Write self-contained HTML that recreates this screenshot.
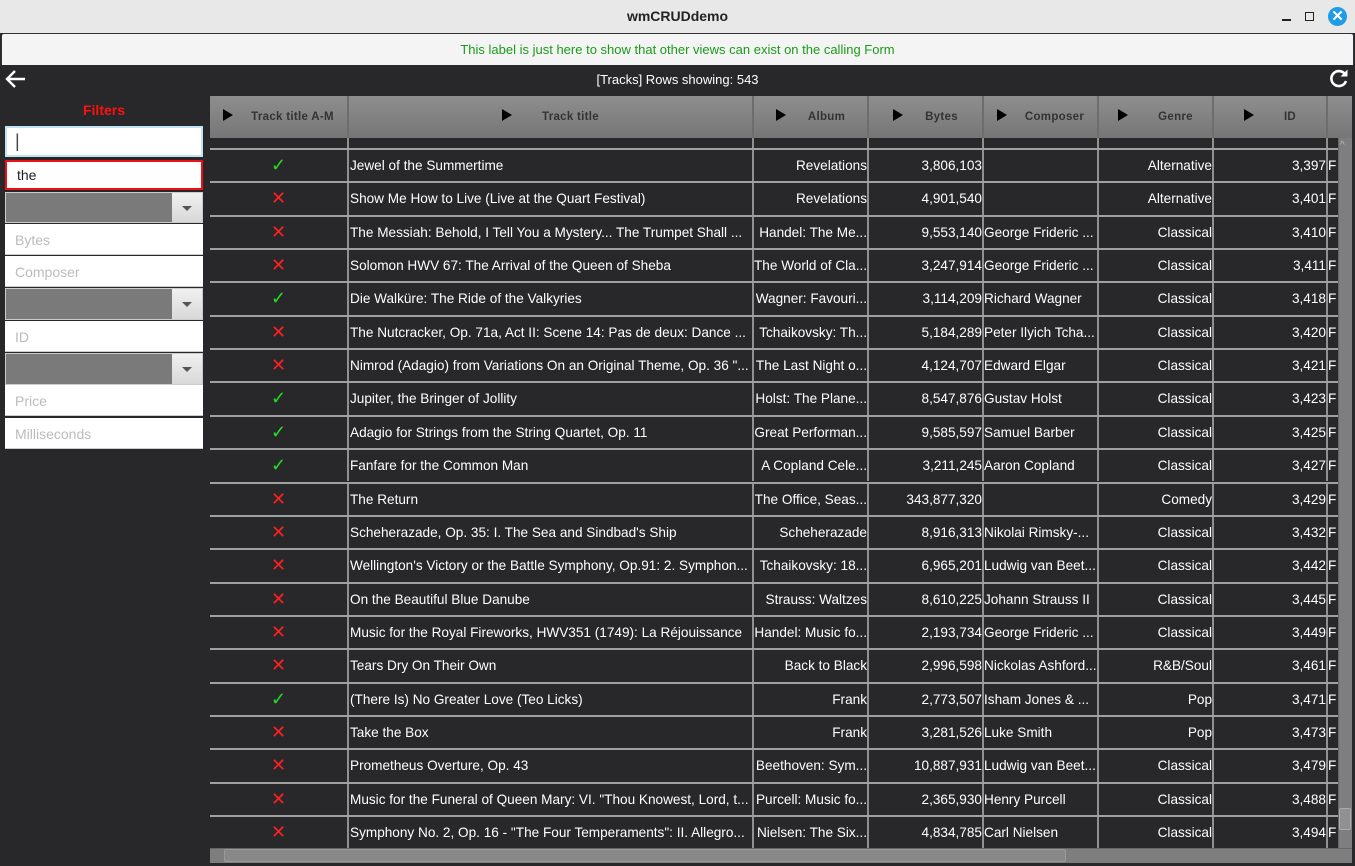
<!DOCTYPE html>
<html><head><meta charset="utf-8"><style>
*{box-sizing:border-box;margin:0;padding:0}
body{width:1355px;height:866px;overflow:hidden;background:#28282b;font-family:"Liberation Sans",sans-serif;position:relative}
.abs{position:absolute}
#title{left:0;top:0;width:1355px;height:33px;background:#e8e8e8;text-align:center;font-weight:bold;font-size:14px;line-height:33px;color:#222}
#lbl{left:1px;top:33px;width:1353px;height:32px;background:#f4f4f4;border:1px solid #333;border-bottom:none;border-radius:3px 3px 0 0;text-align:center;font-size:13px;line-height:32px;color:#1a9a1a}
#bar{left:0;top:65px;width:1355px;height:30px;background:#28282b;color:#fff;font-size:13px;text-align:center;line-height:30px}
.fin{left:5px;width:198px;background:#fff;font-size:14px;color:#bbb;padding-left:10px;border-bottom:1px solid #ccc}
.combo{left:5px;width:198px;background:#7a7a7a;border:1px solid #ccc}
.combo i{position:absolute;right:0;top:0;width:30px;height:100%;background:linear-gradient(#f0f0f0,#d8d8d8)}
.combo i:after{content:"";position:absolute;left:10px;top:13px;border:5px solid transparent;border-top:5px solid #555;border-bottom:none}
#grid{left:210px;top:96px;width:1142px;height:752px;overflow:hidden;background:#28282b}
.hd{position:absolute;top:0;height:42px;background:linear-gradient(#8e8e8e,#767676);border-right:2px solid #6d6d6d;color:#333;font-weight:bold;font-size:11.5px;letter-spacing:.3px;line-height:43px;text-align:center}
.hd b{display:inline-block;width:0;height:0;border-left:10px solid #000;border-top:6px solid transparent;border-bottom:6px solid transparent;vertical-align:middle;margin-right:30px;position:relative;top:-2px}
.row{position:absolute;left:0;width:1128px;height:33.35px;border-top:2px solid #a0a0a0}
.c{position:absolute;top:0;height:100%;border-right:2px solid #909090;color:#fff;font-size:13.6px;line-height:31px;white-space:nowrap;overflow:hidden}
.c1{left:0;width:139px;text-align:center}
.c2{left:139px;width:405px;text-align:left;padding-left:1px}
.c3{left:544px;width:115px;text-align:right}
.c4{left:659px;width:115px;text-align:right}
.c5{left:774px;width:115px}
.c6{left:889px;width:115px;text-align:right}
.c7{left:1004px;width:114px;text-align:right}
.c8{left:1118px;width:12px}
.y{color:#22dd22;font-size:18px}
.n{color:#ff2020;font-size:18px}
</style></head><body>
<div id="title" class="abs">wmCRUDdemo</div>
<div class="abs" style="left:1282px;top:19px;width:9px;height:1.5px;background:#222"></div>
<div class="abs" style="left:1305px;top:12px;width:9px;height:9px;border:1.5px solid #222"></div>
<div class="abs" style="left:1328px;top:7px;width:19px;height:19px;border-radius:50%;background:#1e9ce8;color:#fff;font-size:15px;font-weight:bold;text-align:center;line-height:19px">✕</div>
<div id="lbl" class="abs">This label is just here to show that other views can exist on the calling Form</div>
<div id="bar" class="abs">[Tracks] Rows showing: 543</div>
<svg class="abs" style="left:5px;top:69px" width="22" height="20" viewBox="0 0 22 20"><path d="M20 10H3M10 2L2 10l8 8" stroke="#fff" stroke-width="2.4" fill="none"/></svg>
<svg class="abs" style="left:1328px;top:67px" width="22" height="22" viewBox="0 0 22 22"><path d="M17.5 8A7.5 7.5 0 1 0 18 14" stroke="#fff" stroke-width="2.6" fill="none"/><path d="M19.5 2.5v7h-7z" fill="#fff"/></svg>
<div class="abs" style="left:0;top:102px;width:208px;text-align:center;color:#ff1010;font-weight:bold;font-size:14px">Filters</div>
<div class="abs fin" style="top:126px;height:31px;border:2px solid #bfe3f0;color:#444;line-height:27px;padding-left:8px;font-size:18px">|</div>
<div class="abs fin" style="top:160px;height:30px;border:2px solid #ee1010;color:#222;line-height:27px">the</div>
<div class="abs combo" style="top:192px;height:31px"><i></i></div>
<div class="abs fin" style="top:224px;height:31px;line-height:33px">Bytes</div>
<div class="abs fin" style="top:256px;height:31px;line-height:33px">Composer</div>
<div class="abs combo" style="top:288px;height:32px"><i></i></div>
<div class="abs fin" style="top:321px;height:31px;line-height:33px">ID</div>
<div class="abs combo" style="top:353px;height:32px"><i></i></div>
<div class="abs fin" style="top:385px;height:31px;line-height:33px">Price</div>
<div class="abs fin" style="top:418px;height:31px;line-height:33px">Milliseconds</div>

<div id="grid" class="abs">
<div class="hd" style="left:0;width:139px"><b style="margin-right:18px"></b>Track title A-M</div>
<div class="hd" style="left:139px;width:405px"><b></b>Track title</div>
<div class="hd" style="left:544px;width:115px"><b style="margin-right:22px"></b>Album</div>
<div class="hd" style="left:659px;width:115px"><b style="margin-right:22px"></b>Bytes</div>
<div class="hd" style="left:774px;width:115px"><b style="margin-right:18px"></b>Composer</div>
<div class="hd" style="left:889px;width:115px"><b></b>Genre</div>
<div class="hd" style="left:1004px;width:114px"><b></b>ID</div>
<div class="hd" style="left:1118px;width:24px;border:none"></div>
<div class="row" style="top:42px;height:10px;border:none"><div class="c c1"></div><div class="c c2"></div><div class="c c3"></div><div class="c c4"></div><div class="c c5"></div><div class="c c6"></div><div class="c c7"></div></div>

<div class="row" style="top:52px"><div class="c c1 y">✓</div><div class="c c2">Jewel of the Summertime</div><div class="c c3">Revelations</div><div class="c c4">3,806,103</div><div class="c c5"></div><div class="c c6">Alternative</div><div class="c c7">3,397</div><div class="c c8">F</div></div>
<div class="row" style="top:85.35px"><div class="c c1 n">✕</div><div class="c c2">Show Me How to Live (Live at the Quart Festival)</div><div class="c c3">Revelations</div><div class="c c4">4,901,540</div><div class="c c5"></div><div class="c c6">Alternative</div><div class="c c7">3,401</div><div class="c c8">F</div></div>
<div class="row" style="top:118.7px"><div class="c c1 n">✕</div><div class="c c2">The Messiah: Behold, I Tell You a Mystery... The Trumpet Shall ...</div><div class="c c3">Handel: The Me...</div><div class="c c4">9,553,140</div><div class="c c5">George Frideric ...</div><div class="c c6">Classical</div><div class="c c7">3,410</div><div class="c c8">F</div></div>
<div class="row" style="top:152.05px"><div class="c c1 n">✕</div><div class="c c2">Solomon HWV 67: The Arrival of the Queen of Sheba</div><div class="c c3">The World of Cla...</div><div class="c c4">3,247,914</div><div class="c c5">George Frideric ...</div><div class="c c6">Classical</div><div class="c c7">3,411</div><div class="c c8">F</div></div>
<div class="row" style="top:185.4px"><div class="c c1 y">✓</div><div class="c c2">Die Walküre: The Ride of the Valkyries</div><div class="c c3">Wagner: Favouri...</div><div class="c c4">3,114,209</div><div class="c c5">Richard Wagner</div><div class="c c6">Classical</div><div class="c c7">3,418</div><div class="c c8">F</div></div>
<div class="row" style="top:218.75px"><div class="c c1 n">✕</div><div class="c c2">The Nutcracker, Op. 71a, Act II: Scene 14: Pas de deux: Dance ...</div><div class="c c3">Tchaikovsky: Th...</div><div class="c c4">5,184,289</div><div class="c c5">Peter Ilyich Tcha...</div><div class="c c6">Classical</div><div class="c c7">3,420</div><div class="c c8">F</div></div>
<div class="row" style="top:252.1px"><div class="c c1 n">✕</div><div class="c c2">Nimrod (Adagio) from Variations On an Original Theme, Op. 36 "...</div><div class="c c3">The Last Night o...</div><div class="c c4">4,124,707</div><div class="c c5">Edward Elgar</div><div class="c c6">Classical</div><div class="c c7">3,421</div><div class="c c8">F</div></div>
<div class="row" style="top:285.45px"><div class="c c1 y">✓</div><div class="c c2">Jupiter, the Bringer of Jollity</div><div class="c c3">Holst: The Plane...</div><div class="c c4">8,547,876</div><div class="c c5">Gustav Holst</div><div class="c c6">Classical</div><div class="c c7">3,423</div><div class="c c8">F</div></div>
<div class="row" style="top:318.8px"><div class="c c1 y">✓</div><div class="c c2">Adagio for Strings from the String Quartet, Op. 11</div><div class="c c3">Great Performan...</div><div class="c c4">9,585,597</div><div class="c c5">Samuel Barber</div><div class="c c6">Classical</div><div class="c c7">3,425</div><div class="c c8">F</div></div>
<div class="row" style="top:352.15px"><div class="c c1 y">✓</div><div class="c c2">Fanfare for the Common Man</div><div class="c c3">A Copland Cele...</div><div class="c c4">3,211,245</div><div class="c c5">Aaron Copland</div><div class="c c6">Classical</div><div class="c c7">3,427</div><div class="c c8">F</div></div>
<div class="row" style="top:385.5px"><div class="c c1 n">✕</div><div class="c c2">The Return</div><div class="c c3">The Office, Seas...</div><div class="c c4">343,877,320</div><div class="c c5"></div><div class="c c6">Comedy</div><div class="c c7">3,429</div><div class="c c8">F</div></div>
<div class="row" style="top:418.85px"><div class="c c1 n">✕</div><div class="c c2">Scheherazade, Op. 35: I. The Sea and Sindbad's Ship</div><div class="c c3">Scheherazade</div><div class="c c4">8,916,313</div><div class="c c5">Nikolai Rimsky-...</div><div class="c c6">Classical</div><div class="c c7">3,432</div><div class="c c8">F</div></div>
<div class="row" style="top:452.2px"><div class="c c1 n">✕</div><div class="c c2">Wellington's Victory or the Battle Symphony, Op.91: 2. Symphon...</div><div class="c c3">Tchaikovsky: 18...</div><div class="c c4">6,965,201</div><div class="c c5">Ludwig van Beet...</div><div class="c c6">Classical</div><div class="c c7">3,442</div><div class="c c8">F</div></div>
<div class="row" style="top:485.55px"><div class="c c1 n">✕</div><div class="c c2">On the Beautiful Blue Danube</div><div class="c c3">Strauss: Waltzes</div><div class="c c4">8,610,225</div><div class="c c5">Johann Strauss II</div><div class="c c6">Classical</div><div class="c c7">3,445</div><div class="c c8">F</div></div>
<div class="row" style="top:518.9px"><div class="c c1 n">✕</div><div class="c c2">Music for the Royal Fireworks, HWV351 (1749): La Réjouissance</div><div class="c c3">Handel: Music fo...</div><div class="c c4">2,193,734</div><div class="c c5">George Frideric ...</div><div class="c c6">Classical</div><div class="c c7">3,449</div><div class="c c8">F</div></div>
<div class="row" style="top:552.25px"><div class="c c1 n">✕</div><div class="c c2">Tears Dry On Their Own</div><div class="c c3">Back to Black</div><div class="c c4">2,996,598</div><div class="c c5">Nickolas Ashford...</div><div class="c c6">R&amp;B/Soul</div><div class="c c7">3,461</div><div class="c c8">F</div></div>
<div class="row" style="top:585.6px"><div class="c c1 y">✓</div><div class="c c2">(There Is) No Greater Love (Teo Licks)</div><div class="c c3">Frank</div><div class="c c4">2,773,507</div><div class="c c5">Isham Jones &amp; ...</div><div class="c c6">Pop</div><div class="c c7">3,471</div><div class="c c8">F</div></div>
<div class="row" style="top:618.95px"><div class="c c1 n">✕</div><div class="c c2">Take the Box</div><div class="c c3">Frank</div><div class="c c4">3,281,526</div><div class="c c5">Luke Smith</div><div class="c c6">Pop</div><div class="c c7">3,473</div><div class="c c8">F</div></div>
<div class="row" style="top:652.3px"><div class="c c1 n">✕</div><div class="c c2">Prometheus Overture, Op. 43</div><div class="c c3">Beethoven: Sym...</div><div class="c c4">10,887,931</div><div class="c c5">Ludwig van Beet...</div><div class="c c6">Classical</div><div class="c c7">3,479</div><div class="c c8">F</div></div>
<div class="row" style="top:685.65px"><div class="c c1 n">✕</div><div class="c c2">Music for the Funeral of Queen Mary: VI. "Thou Knowest, Lord, t...</div><div class="c c3">Purcell: Music fo...</div><div class="c c4">2,365,930</div><div class="c c5">Henry Purcell</div><div class="c c6">Classical</div><div class="c c7">3,488</div><div class="c c8">F</div></div>
<div class="row" style="top:719px"><div class="c c1 n">✕</div><div class="c c2">Symphony No. 2, Op. 16 -  "The Four Temperaments": II. Allegro...</div><div class="c c3">Nielsen: The Six...</div><div class="c c4">4,834,785</div><div class="c c5">Carl Nielsen</div><div class="c c6">Classical</div><div class="c c7">3,494</div><div class="c c8">F</div></div>

<div class="abs" style="left:1128px;top:42px;width:14px;height:710px;background:#7e7e7e;border-left:1px solid #666"></div>
<div class="abs" style="left:1130px;top:44px;color:#bbb;font-size:10px">^</div>
<div class="abs" style="left:1129px;top:712px;width:12px;height:22px;background:#909090;border:1px solid #aaa;border-radius:2px"></div>
</div>
<div class="abs" style="left:210px;top:848px;width:1142px;height:15px;background:#7e7e7e;border-top:1px solid #666"></div>
<div class="abs" style="left:224px;top:849px;width:842px;height:13px;background:#888;border:1px solid #9a9a9a;border-radius:2px"></div>
</body></html>
